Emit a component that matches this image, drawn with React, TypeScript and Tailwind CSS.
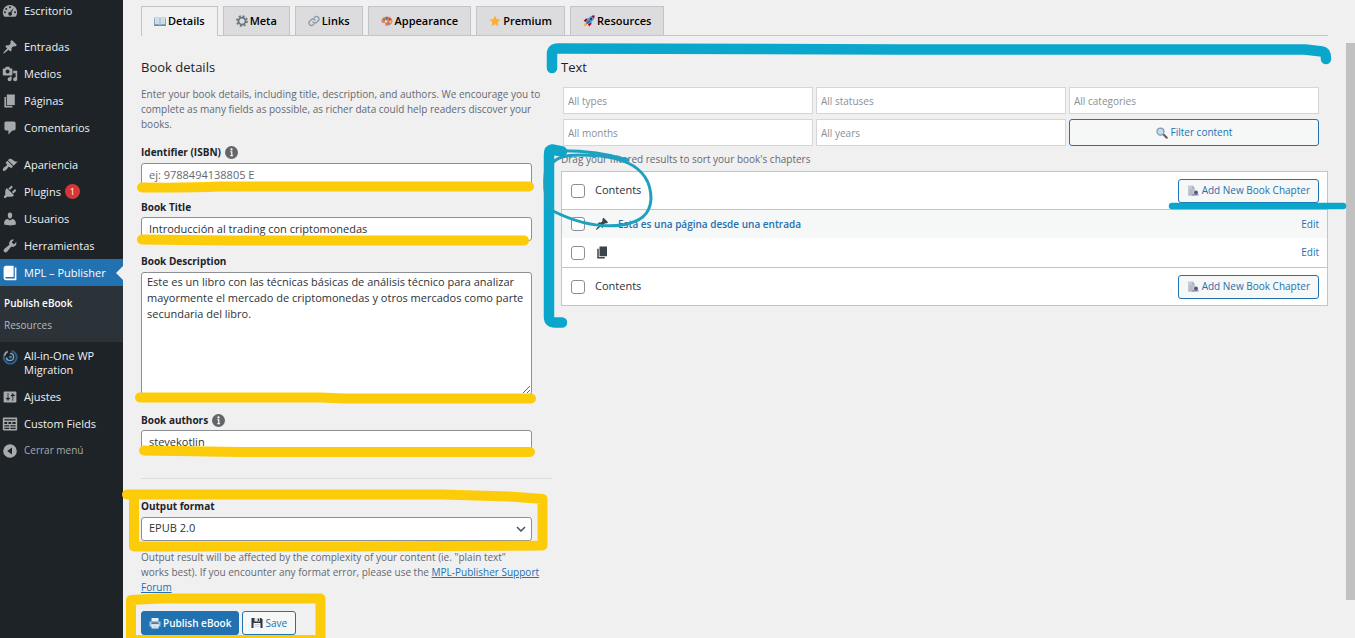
import { useState } from "react";
import type { ReactNode } from "react";

type IconProps = { className?: string };

const glyphs: Record<string, string> = {
  dashboard:
    "M10 2.5a9 9 0 0 0-9 9c0 2.2.8 4.3 2.2 5.8h13.6A8.600 8.600 0 0 0 19 11.500a9 9 0 0 0-9-9zM10 4.200a1.200 1.200 0 1 1 0 2.400 1.200 1.200 0 0 1 0-2.400zM5.300 6.200a1.200 1.200 0 1 1 0 2.400 1.200 1.200 0 0 1 0-2.400zM3.700 10.400a1.200 1.200 0 1 1 0 2.400 1.200 1.200 0 0 1 0-2.400zM16.300 10.400a1.200 1.200 0 1 1 0 2.400 1.200 1.200 0 0 1 0-2.400zM14.800 6l-3 6.100a2.200 2.200 0 1 1-1.700-.8z",
  pin: "M10.44 3.02l1.82-1.82 6.36 6.35-1.83 1.82c-1.05-.68-2.48-.57-3.41.36l-.75.75c-.92.93-1.04 2.35-.35 3.41l-1.83 1.82-2.41-2.41-2.8 2.79c-.42.42-3.38 2.71-3.8 2.29s1.86-3.39 2.28-3.81l2.79-2.79L4.1 9.36l1.83-1.82c1.05.69 2.48.57 3.4-.36l.75-.75c.93-.92 1.05-2.35.36-3.41z",
  media:
    "M13 11V4c0-.55-.45-1-1-1h-1.67L9 1H5L3.67 3H2c-.55 0-1 .45-1 1v7c0 .55.45 1 1 1h10c.55 0 1-.45 1-1zM7 4.500c1.380 0 2.500 1.120 2.500 2.500S8.380 9.500 7 9.500 4.500 8.380 4.500 7 5.620 4.500 7 4.500zM14 6h5v10.500c0 1.380-1.120 2.500-2.500 2.500S14 17.880 14 16.500s1.120-2.500 2.500-2.500c.17 0 .34.02.5.05V9h-3V6zm-4 8.050V13h2v3.500c0 1.380-1.120 2.500-2.500 2.500S7 17.880 7 16.500 8.120 14 9.500 14c.17 0 .34.02.5.05z",
  page: "M6 15V2h10v13H6zm-1 1h8v2H3V5h2v11z",
  comment:
    "M5 2h10c1.100 0 2 .9 2 2v7c0 1.100-.9 2-2 2h-2l-5 5v-5H5c-1.100 0-2-.9-2-2V4c0-1.100.9-2 2-2z",
  brush:
    "M14.480 11.060L7.410 3.990l1.500-1.500c.5-.56 2.300-.47 3.510.32 1.210.8 1.430 1.280 2.910 2.100 1.180.64 2.450 1.260 4.450.85zm-.71.71L6.700 4.700 4.930 6.470c-.39.39-.39 1.020 0 1.410l1.060 1.060c.39.39.39 1.030 0 1.420-.6.6-1.430 1.110-2.210 1.690-.35.26-.7.53-1.010.84C1.430 14.230.4 16.080 1.400 17.070c.99 1 2.840-.03 4.180-1.360.31-.31.58-.66.85-1.020.57-.78 1.080-1.610 1.690-2.210.39-.39 1.020-.39 1.410 0l1.060 1.060c.39.39 1.020.39 1.410 0z",
  plug: "M13.110 4.360L9.870 7.600 8 5.730l3.240-3.240c.35-.34 1.050-.2 1.560.32.52.51.66 1.210.31 1.550zm-8 1.770l.91-1.120 9.010 9.010-1.190.84c-.71.71-2.630 1.160-3.820 1.160H6.140L4.900 17.260c-.59.59-1.540.59-2.120 0-.59-.58-.59-1.530 0-2.120l1.240-1.240v-3.880c0-1.130.4-3.190 1.090-3.890zm7.260 3.970l3.240-3.240c.34-.35 1.040-.21 1.550.31.52.51.66 1.210.31 1.550l-3.240 3.250z",
  user: "M10 9.250c-2.270 0-2.730-3.440-2.730-3.440C7 4.020 7.820 2 9.970 2c2.160 0 2.980 2.020 2.710 3.810 0 0-.41 3.440-2.680 3.440zm0 2.570L12.720 10c2.390 0 4.520 2.330 4.520 4.530v2.490s-3.650 1.130-7.240 1.130c-3.650 0-7.240-1.130-7.240-1.130v-2.490c0-2.250 1.940-4.480 4.470-4.480z",
  wrench:
    "M16.680 9.770c-1.340 1.340-3.300 1.670-4.950.99l-5.410 6.520c-.99.99-2.590.99-3.580 0s-.99-2.590 0-3.570l6.520-5.420c-.68-1.650-.35-3.610.99-4.950 1.280-1.280 3.120-1.620 4.720-1.060l-2.890 2.890 2.820 2.820 2.860-2.870c.53 1.580.18 3.390-1.080 4.650z",
  book: "M16 3h2v16H5c-1.660 0-3-1.340-3-3V4c0-1.660 1.340-3 3-3h9.500v14H5c-.55 0-1 .45-1 1s.45 1 1 1h11V3z",
  sliders:
    "M18 16V4c0-.55-.45-1-1-1H3c-.55 0-1 .45-1 1v12c0 .55.45 1 1 1h14c.55 0 1-.45 1-1zM8 11h1c.55 0 1 .45 1 1s-.45 1-1 1H8v1.500c0 .28-.22.5-.5.5s-.5-.22-.5-.5V13H6c-.55 0-1-.45-1-1s.45-1 1-1h1V5.500c0-.28.22-.5.5-.5s.5.22.5.5V11zm5-2h-1c-.55 0-1-.45-1-1s.45-1 1-1h1V5.500c0-.28.22-.5.5-.5s.5.22.5.5V7h1c.55 0 1 .45 1 1s-.45 1-1 1h-1v5.500c0 .28-.22.5-.5.5s-.5-.22-.5-.5V9z",
  fields:
    "M2 2h16a1 1 0 0 1 1 1v14a1 1 0 0 1-1 1H2a1 1 0 0 1-1-1V3a1 1 0 0 1 1-1zM3 4v1.600h14V4zM3 7.500V10h3.500V7.500zM8 7.500V10h3.500V7.500zM13 7.500V10h4V7.500zM3 11.500v1.600h6v-1.600zM10.500 11.500v1.600H17v-1.600zM3 14.800v1.400h6v-1.400zM10.500 14.800v1.400H17v-1.400z",
  collapse:
    "M10 1.500a8.500 8.500 0 1 0 0 17 8.500 8.500 0 0 0 0-17zM12.500 5.500v9L6.500 10z",
};

function Glyph({ name, className }: { name: string; className?: string }) {
  return (
    <svg viewBox="0 0 20 20" className={className} fill="currentColor" fillRule="evenodd" aria-hidden="true">
      <path d={glyphs[name]} />
    </svg>
  );
}

function MigrationIcon({ className }: IconProps) {
  return (
    <svg viewBox="0 0 20 20" className={className} fill="none" aria-hidden="true">
      <path d="M12 2.500A8 8 0 1 1 3 7" stroke="#2f5f85" strokeWidth="2.600" />
      <path d="M3 8a8 8 0 0 1 4-5" stroke="#9aa7b1" strokeWidth="2.200" />
      <path d="M10 5.500a4.500 4.500 0 1 1-4.500 5" stroke="#7fa5c0" strokeWidth="1.800" />
      <circle cx="10.500" cy="10" r="2" fill="#2f7fb5" />
    </svg>
  );
}

function OpenBook({ className }: IconProps) {
  return (
    <svg viewBox="0 0 24 24" className={className} aria-hidden="true">
      <path d="M0 5h24v15H0z" fill="#5b8fb9" />
      <path d="M1.500 3.500C6 2.500 10 3 12 5c2-2 6-2.500 10.500-1.500V17C18 16 14 16.500 12 18.500 10 16.500 6 16 1.500 17z" fill="#dfeaf3" stroke="#8ca6bd" />
      <path d="M12 5v13.500" stroke="#6e8ba5" strokeWidth="1.500" />
      <path d="M4 7.500h5.500M4 10.500h5.500M4 13.500h5.500M14.500 7.500H20M14.500 10.500H20M14.500 13.500H20" stroke="#a9bccb" />
    </svg>
  );
}

function Gear({ className }: IconProps) {
  return (
    <svg viewBox="0 0 24 24" className={className} fill="none" stroke="#66757f" aria-hidden="true">
      <circle cx="12" cy="12" r="7" strokeWidth="3.500" />
      <circle cx="12" cy="12" r="10" strokeWidth="3.500" strokeDasharray="4 3.854" />
    </svg>
  );
}

function Chain({ className }: IconProps) {
  return (
    <svg viewBox="0 0 24 24" className={className} fill="none" stroke="#8899a6" strokeWidth="2.600" strokeLinecap="round" aria-hidden="true">
      <path d="M10 14a5 5 0 0 0 7.500.5l3.500-3.500a5 5 0 0 0-7-7l-2 2" />
      <path d="M14 10a5 5 0 0 0-7.500-.5L3 13a5 5 0 0 0 7 7l2-2" />
    </svg>
  );
}

function Palette({ className }: IconProps) {
  return (
    <svg viewBox="0 0 24 24" className={className} aria-hidden="true">
      <path d="M12 3C5 3 0 7.500 1 13c.7 3.500 3 3 5 2.800 2.500-.3 2.500 1.500 2 3C7.500 21 10 22 13 21.500c6-.8 10.500-5 10-10C22.500 6 18 3 12 3z" fill="#d9876a" />
      <circle cx="6" cy="9" r="2" fill="#5c913b" />
      <circle cx="11.500" cy="6.500" r="2" fill="#226699" />
      <circle cx="17.500" cy="8.500" r="2.200" fill="#dd2e44" />
      <circle cx="19" cy="13.500" r="2" fill="#ffcc4d" />
      <circle cx="14.500" cy="17.500" r="2" fill="#9266cc" />
      <circle cx="10" cy="13" r="2" fill="#f5f8fa" />
    </svg>
  );
}

function StarIcon({ className }: IconProps) {
  return (
    <svg viewBox="0 0 24 24" className={className} aria-hidden="true">
      <path d="M12 1l3.300 7.300 7.900.9-5.900 5.300 1.700 7.900L12 18.300l-7 4.100 1.700-7.900L.8 9.200l7.900-.9z" fill="#ffac33" />
    </svg>
  );
}

function Rocket({ className }: IconProps) {
  return (
    <svg viewBox="0 0 24 24" className={className} aria-hidden="true">
      <path d="M1 12l5-5 6 1-6 6zM12 23l5-5-1-6-6 6z" fill="#a0041e" />
      <path d="M23 1c-6 0-11 2-16 10l-1 4 3 3 4-1C21 12 23 7 23 1z" fill="#55a0d8" />
      <path d="M23 1c-2 0-4 .3-6 1l5 5c.7-2 1-4 1-6z" fill="#a0041e" />
      <path d="M14 11L5 19" stroke="#3b5998" strokeWidth="3" />
      <circle cx="16" cy="8" r="2.300" fill="#253a5c" />
      <path d="M2 22c0-4 1-6 4-6l2 2c0 3-2 4-6 4z" fill="#ffac33" />
    </svg>
  );
}

function Magnifier({ className }: IconProps) {
  return (
    <svg viewBox="0 0 24 24" className={className} aria-hidden="true">
      <path d="M14.500 14.500l7 7" stroke="#66585a" strokeWidth="4" strokeLinecap="round" />
      <circle cx="9" cy="9" r="7" fill="#bbddf5" stroke="#8899a6" strokeWidth="2.500" />
    </svg>
  );
}

function PageAdd({ className }: IconProps) {
  return (
    <svg viewBox="0 0 24 24" className={className} aria-hidden="true">
      <path d="M2 1h9l5 6v15H2z" fill="#c3cbd4" />
      <path d="M11 1v6h5z" fill="#9aa6b2" />
      <path d="M4.500 10h8M4.500 14h7M4.500 18h6" stroke="#98a4b0" strokeWidth="1.500" />
      <path d="M10 19.500h13" stroke="#8f9fb0" strokeWidth="3.500" />
      <circle cx="18" cy="15" r="4" fill="#6b4a86" />
    </svg>
  );
}

function Printer({ className }: IconProps) {
  return (
    <svg viewBox="0 0 24 24" className={className} aria-hidden="true">
      <path d="M5 2h14v7H5z" fill="#e8f1f8" />
      <path d="M1 9h22v10H1z" fill="#a9c7de" />
      <path d="M5 11h14v2.500H5z" fill="#2b5d86" />
      <path d="M5 15h14v8H5z" fill="#f5f9fc" />
      <path d="M7 18h10M7 20.500h10" stroke="#7f9fb8" />
    </svg>
  );
}

function Floppy({ className }: IconProps) {
  return (
    <svg viewBox="0 0 24 24" className={className} aria-hidden="true">
      <path d="M1 2h19l3 3v17H1z" fill="#31373d" />
      <path d="M7 2h11v7H7z" fill="#e1e8ed" />
      <path d="M13.500 3h3v5h-3z" fill="#31373d" />
      <path d="M5 12h14v10H5z" fill="#f5f8fa" />
      <path d="M7 15h10M7 18.500h10" stroke="#99aab5" />
    </svg>
  );
}

function InfoDot() {
  return (
    <svg viewBox="0 0 14 14" className="size-[13px]" aria-hidden="true">
      <circle cx="7" cy="7" r="7" fill="#646568" />
      <circle cx="7" cy="3.700" r="1.200" fill="#fff" />
      <path d="M5.600 6.200h1.700v4.200M5.500 10.500h3.300" stroke="#fff" strokeWidth="1.300" fill="none" />
    </svg>
  );
}

function MenuItem({ icon, children, active }: { icon: ReactNode; children: ReactNode; active?: boolean }) {
  return (
    <a
      href="#"
      aria-current={active ? "page" : undefined}
      className={
        active
          ? "relative flex min-h-[27px] items-center gap-[6px] bg-[#2271b1] pl-[2px] text-[11px] leading-[14px] text-white"
          : "relative flex min-h-[27px] items-center gap-[6px] pl-[2px] text-[11px] leading-[14px] text-[#f0f0f1]"
      }
    >
      {icon}
      {children}
      {active && (
        <svg viewBox="0 0 7 14" className="absolute right-0 h-[14px] w-[7px]" aria-hidden="true">
          <path d="M7 0v14L0 7z" fill="#f0f0f1" />
        </svg>
      )}
    </a>
  );
}

const iconClass = "size-4 shrink-0 text-[#a7aaad]";

function Sidebar() {
  return (
    <nav className="w-[123px] shrink-0 bg-[#1d2327]" aria-label="Admin menu">
      <div className="-mt-[3px] flex flex-col">
        <MenuItem icon={<Glyph name="dashboard" className={iconClass} />}>Escritorio</MenuItem>
        <div className="mt-[9px]">
          <MenuItem icon={<Glyph name="pin" className={iconClass} />}>Entradas</MenuItem>
          <MenuItem icon={<Glyph name="media" className={iconClass} />}>Medios</MenuItem>
          <MenuItem icon={<Glyph name="page" className={iconClass} />}>Páginas</MenuItem>
          <MenuItem icon={<Glyph name="comment" className={iconClass} />}>Comentarios</MenuItem>
        </div>
        <div className="mt-[10px]">
          <MenuItem icon={<Glyph name="brush" className={iconClass} />}>Apariencia</MenuItem>
          <MenuItem icon={<Glyph name="plug" className={iconClass} />}>
            Plugins
            <span className="-ml-0.5 flex size-[15px] items-center justify-center rounded-full bg-[#d63638] text-[9px] text-white">
              1
            </span>
          </MenuItem>
          <MenuItem icon={<Glyph name="user" className={iconClass} />}>Usuarios</MenuItem>
          <MenuItem icon={<Glyph name="wrench" className={iconClass} />}>Herramientas</MenuItem>
          <MenuItem active icon={<Glyph name="book" className="size-4 shrink-0" />}>
            MPL – Publisher
          </MenuItem>
        </div>
        <div className="flex flex-col bg-[#2c3338] py-[6px] pl-1 text-[10px] leading-[22px]">
          <a href="#" className="font-semibold text-white">
            Publish eBook
          </a>
          <a href="#" className="text-[#b7babd]">
            Resources
          </a>
        </div>
        <div className="pt-[7px] pb-[6px]">
          <a href="#" className="flex gap-[6px] pl-[2px] text-[11px] leading-[14px] text-[#f0f0f1]">
            <MigrationIcon className="size-4 shrink-0" />
            <span>All-in-One WP Migration</span>
          </a>
        </div>
        <MenuItem icon={<Glyph name="sliders" className={iconClass} />}>Ajustes</MenuItem>
        <MenuItem icon={<Glyph name="fields" className={iconClass} />}>Custom Fields</MenuItem>
        <button type="button" className="flex h-[27px] items-center gap-[6px] pl-[2px] text-[10px] text-[#a7aaad]">
          <Glyph name="collapse" className={iconClass} />
          Cerrar menú
        </button>
      </div>
    </nav>
  );
}

const tabs = [
  { label: "Details", Icon: OpenBook },
  { label: "Meta", Icon: Gear },
  { label: "Links", Icon: Chain },
  { label: "Appearance", Icon: Palette },
  { label: "Premium", Icon: StarIcon },
  { label: "Resources", Icon: Rocket },
];

function Tabs() {
  return (
    <div className="flex gap-[5px] border-b border-[#c3c4c7]">
      {tabs.map(({ label, Icon }, i) => (
        <a
          key={label}
          href="#"
          className={
            i === 0
              ? "-mb-px flex h-[30px] items-center gap-[2px] border border-b-0 border-[#c3c4c7] bg-[#f0f0f1] px-3 text-[11px] font-semibold text-black"
              : "flex h-[29px] items-center gap-[2px] border border-b-0 border-[#c3c4c7] bg-[#dcdcde] px-3 text-[11px] font-semibold text-black"
          }
        >
          <Icon className="size-3" />
          {label}
        </a>
      ))}
    </div>
  );
}

const fieldClass =
  "block h-6 w-full rounded-[3px] border border-[#8c8f94] bg-white px-[7px] pb-[2px] text-[11px] text-[#2c3338] placeholder:text-[#646970]";
const labelClass = "flex h-4 items-center gap-1 text-[10px] font-bold text-[#1d2327]";

function DetailsForm() {
  const [title, setTitle] = useState("Introducción al trading con criptomonedas");
  const [authors, setAuthors] = useState("stevekotlin");
  return (
    <form className="pt-[21px]" onSubmit={(e) => e.preventDefault()}>
      <h2 className="text-[13px] leading-5 text-[#1d2327]">Book details</h2>
      <p className="mt-[10px] mr-2 text-[10px] leading-[15px] text-[#646970]">
        Enter your book details, including title, description, and authors. We encourage you to complete as many fields
        as possible, as richer data could help readers discover your books.
      </p>
      <div className="mr-5">
        <div className="mt-3 flex flex-col gap-[3px]">
          <label htmlFor="isbn" className={labelClass}>
            Identifier (ISBN) <InfoDot />
          </label>
          <input id="isbn" placeholder="ej: 9788494138805 E" className={fieldClass} />
        </div>
        <div className="mt-3 flex flex-col gap-[2px]">
          <label htmlFor="title" className={labelClass}>
            Book Title
          </label>
          <input id="title" value={title} onChange={(e) => setTitle(e.target.value)} className={fieldClass} />
        </div>
        <div className="mt-3 flex flex-col gap-[3px]">
          <label htmlFor="description" className={labelClass}>
            Book Description
          </label>
          <textarea
            id="description"
            defaultValue="Este es un libro con las técnicas básicas de análisis técnico para analizar mayormente el mercado de criptomonedas y otros mercados como parte secundaria del libro."
            className="block h-[123px] w-full rounded-[3px] border border-[#8c8f94] bg-white px-[5px] py-px text-[11px] leading-4 text-[#2c3338]"
          />
        </div>
        <div className="mt-[17px] flex flex-col gap-[2px]">
          <label htmlFor="authors" className={labelClass}>
            Book authors <InfoDot />
          </label>
          <input id="authors" value={authors} onChange={(e) => setAuthors(e.target.value)} className={fieldClass} />
        </div>
      </div>
      <hr className="mt-6 border-[#dcdcde]" />
      <div className="mt-[19px] mr-5 flex flex-col gap-[3px]">
        <label htmlFor="format" className={labelClass}>
          Output format
        </label>
        <div className="relative">
          <select id="format" className={fieldClass + " appearance-none"}>
            <option>EPUB 2.0</option>
          </select>
          <svg viewBox="0 0 10 6" className="pointer-events-none absolute top-[9px] right-[6px] h-[6px] w-[10px]" aria-hidden="true">
            <path d="M1 1l4 4 4-4" fill="none" stroke="#50575e" strokeWidth="1.600" />
          </svg>
        </div>
      </div>
      <p className="mt-[9px] mr-2 text-[10px] leading-[15px] text-[#646970]">
        Output result will be affected by the complexity of your content (ie. "plain text"
        <br />
        works best). If you encounter any format error, please use the{" "}
        <a href="#" className="text-[#2271b1] underline">
          MPL-Publisher Support
          <br />
          Forum
        </a>
      </p>
      <div className="mt-4 flex gap-[3px]">
        <button
          type="submit"
          className="flex h-6 items-center gap-[2px] rounded-[3px] border border-[#2271b1] bg-[#2271b1] px-[7px] text-[10px] font-semibold text-white"
        >
          <Printer className="size-3" />
          Publish eBook
        </button>
        <button
          type="button"
          className="flex h-6 items-center gap-[2px] rounded-[3px] border border-[#2271b1] bg-[#f6f7f7] px-2 text-[10px] text-[#2271b1]"
        >
          <Floppy className="size-3" />
          Save
        </button>
      </div>
    </form>
  );
}

const filterClass =
  "h-[27px] w-full min-w-0 border border-[#d5d6d9] bg-white px-1 text-[10px] text-[#2c3338] placeholder:text-[#8c8f94]";

const checkClass =
  "block size-[14px] appearance-none rounded-[3px] border border-[#8c8f94] bg-white checked:bg-[#2271b1]";

function ContentsBar({ id, className }: { id: string; className: string }) {
  return (
    <tr>
      <th className={className + " h-[38px] w-[33px] pl-[9px] text-left"}>
        <input type="checkbox" id={id} className={checkClass} />
      </th>
      <th className={className + " text-left text-[11px] font-normal text-[#2c3338]"}>
        <label htmlFor={id}>Contents</label>
      </th>
      <th className={className + " pr-2"}>
        <button
          type="button"
          className="ml-auto flex h-6 items-center gap-[3px] rounded-[3px] border border-[#2271b1] bg-[#f6f7f7] px-2 text-[10px] font-normal text-[#2271b1]"
        >
          <PageAdd className="size-3" />
          Add New Book Chapter
        </button>
      </th>
    </tr>
  );
}

function ChapterList() {
  return (
    <section className="pt-[21px]">
      <h2 className="text-[13px] leading-5 text-[#1d2327]">Text</h2>
      <div className="mt-[10px] mr-[9px] ml-[2px] grid grid-cols-3 gap-x-[3px] gap-y-[5px]">
        {["All types", "All statuses", "All categories", "All months", "All years"].map((name) => (
          <input key={name} placeholder={name} aria-label={name} className={filterClass} />
        ))}
        <button
          type="button"
          className="flex h-[27px] items-center justify-center gap-[3px] rounded-[3px] border border-[#2271b1] bg-[#f6f7f7] text-[10px] text-[#2271b1]"
        >
          <Magnifier className="size-3" />
          Filter content
        </button>
      </div>
      <p className="mt-[6px] text-[10px] leading-[15px] text-[#646970]">
        Drag your filtered results to sort your book's chapters
      </p>
      <table className="mt-1 w-full border-separate border-spacing-0 border border-[#c3c4c7] bg-white">
        <thead>
          <ContentsBar id="all-top" className="border-b border-[#c3c4c7]" />
        </thead>
        <tbody className="text-[10px] text-[#2271b1]">
          <tr className="bg-[#f6f7f7]">
            <td className="h-[28px] pl-[9px]">
              <input type="checkbox" aria-label="Esta es una página desde una entrada" className={checkClass} />
            </td>
            <td>
              <div className="flex items-center gap-[9px]">
                <Glyph name="pin" className="size-[14px] text-[#3c434a]" />
                <a href="#" className="font-semibold">
                  Esta es una página desde una entrada
                </a>
              </div>
            </td>
            <td className="pr-2 text-right">
              <a href="#">Edit</a>
            </td>
          </tr>
          <tr>
            <td className="h-[29px] pl-[9px]">
              <input type="checkbox" aria-label="Página" className={checkClass} />
            </td>
            <td>
              <Glyph name="page" className="size-[15px] text-[#3c434a]" />
            </td>
            <td className="pr-2 text-right">
              <a href="#">Edit</a>
            </td>
          </tr>
        </tbody>
        <tfoot>
          <ContentsBar id="all-bottom" className="border-t border-[#c3c4c7]" />
        </tfoot>
      </table>
    </section>
  );
}

function Annotations() {
  return (
    <svg
      width="1355"
      height="638"
      viewBox="0 0 1355 638"
      fill="none"
      strokeLinecap="round"
      strokeLinejoin="round"
      className="pointer-events-none absolute top-0 left-0"
      aria-hidden="true"
    >
      <g stroke="#fccc0b" strokeWidth="10">
        <path d="M142 187.500Q190 188 220 186.500H529" />
        <path d="M142 239.500L230 240.500H524" />
        <path d="M140 397.500H320L345 398.500H531" />
        <path d="M144 450.500L240 452H530" />
        <path d="M127 494.500H440L510 496.500 542.500 499V545.500L450 546 350 546.500H134V500" />
        <path d="M131 640V600L160 598.500H320.500V640M131 640H320" />
      </g>
      <g stroke="#0aa6cb" strokeWidth="10.500">
        <path d="M552 68V54Q552 48.500 558 48.500L900 49.500H1305L1322 51.500Q1326 52 1326 59" />
        <path d="M562 151.500L552 149.500Q549 150 549 155V317Q549 322.500 555 322.500H562" />
        <path d="M1172 206H1343" strokeWidth="6.500" />
      </g>
      <g stroke="#1fa0bf" strokeWidth="3">
        <path d="M553 151C585 150 608 154 628 160" />
        <path d="M552 164C556 157 566 155 580 155C600 155 615 157 628 163C645 171 651 184 651 199C650 215 640 222 622 225C600 228 575 222 553 211C543 203 543 176 548 160" />
      </g>
    </svg>
  );
}

export default function App() {
  return (
    <div className="relative flex min-h-screen overflow-hidden bg-[#f0f0f1] font-['Open_Sans','Noto_Sans',sans-serif]">
      <Sidebar />
      <main className="min-w-0 flex-1 px-[18px] pt-[6px] pb-[3px]">
        <Tabs />
        <div className="grid grid-cols-[411fr_767fr] gap-[9px]">
          <DetailsForm />
          <ChapterList />
        </div>
      </main>
      <div className="w-[9px] shrink-0 pt-[43px] pb-[38px]">
        <div className="h-full bg-[#c1c1c1]" />
      </div>
      <Annotations />
    </div>
  );
}
